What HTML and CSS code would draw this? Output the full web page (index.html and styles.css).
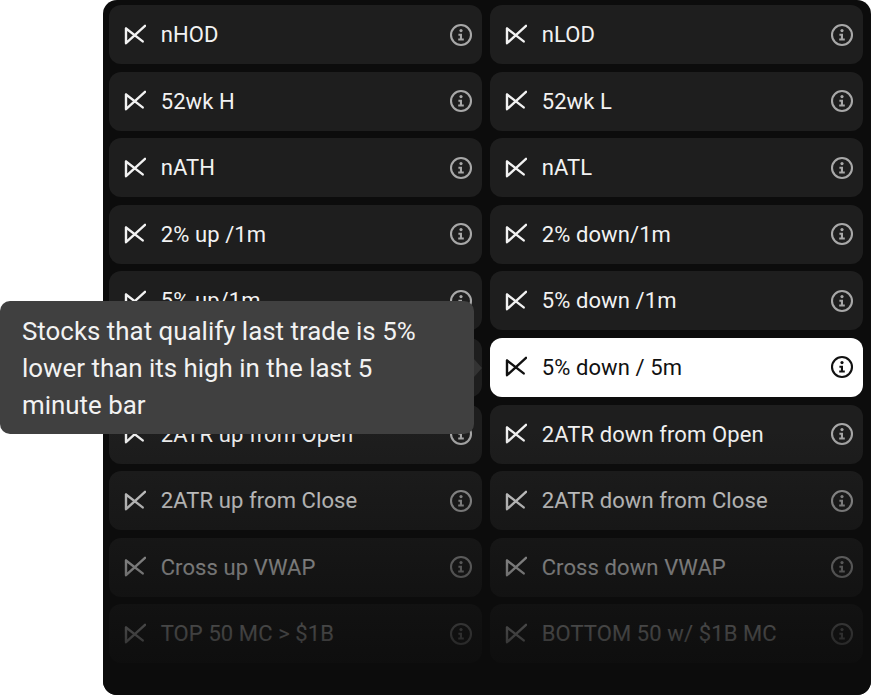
FILE: index.html
```html
<!DOCTYPE html>
<html lang="en">
<head>
  <meta charset="UTF-8">
  <title>Alerts</title>
  <link rel="stylesheet" href="styles.css">
</head>
<body>
  <!-- Shared icons -->
  <svg class="sprite" aria-hidden="true">
    <symbol id="icon-cross" viewBox="0 0 22 22">
      <path d="M2 4.5V19.2L21 1.8M2 4.5L18.7 17.4" fill="none" stroke="currentColor" stroke-width="2.4" stroke-linecap="round" stroke-linejoin="round"/>
    </symbol>
    <symbol id="icon-info" viewBox="0 0 24 24">
      <circle cx="12" cy="12" r="10" fill="none" stroke="currentColor" stroke-width="2.1"/>
      <circle cx="12" cy="7.6" r="1.6" fill="currentColor"/>
      <path d="M9.4 10.8H13V15.6H14.8V17.6H9.2V15.6H10.9V12.8H9.4Z" fill="currentColor"/>
    </symbol>
  </svg>

  <div class="panel">
    <div class="grid">
      <div class="card"><svg class="cross"><use href="#icon-cross"/></svg><span class="label">nHOD</span><svg class="info"><use href="#icon-info"/></svg></div>
      <div class="card"><svg class="cross"><use href="#icon-cross"/></svg><span class="label">nLOD</span><svg class="info"><use href="#icon-info"/></svg></div>
      <div class="card"><svg class="cross"><use href="#icon-cross"/></svg><span class="label">52wk H</span><svg class="info"><use href="#icon-info"/></svg></div>
      <div class="card"><svg class="cross"><use href="#icon-cross"/></svg><span class="label">52wk L</span><svg class="info"><use href="#icon-info"/></svg></div>
      <div class="card"><svg class="cross"><use href="#icon-cross"/></svg><span class="label">nATH</span><svg class="info"><use href="#icon-info"/></svg></div>
      <div class="card"><svg class="cross"><use href="#icon-cross"/></svg><span class="label">nATL</span><svg class="info"><use href="#icon-info"/></svg></div>
      <div class="card"><svg class="cross"><use href="#icon-cross"/></svg><span class="label">2% up /1m</span><svg class="info"><use href="#icon-info"/></svg></div>
      <div class="card"><svg class="cross"><use href="#icon-cross"/></svg><span class="label">2% down/1m</span><svg class="info"><use href="#icon-info"/></svg></div>
      <div class="card"><svg class="cross"><use href="#icon-cross"/></svg><span class="label">5% up/1m</span><svg class="info"><use href="#icon-info"/></svg></div>
      <div class="card"><svg class="cross"><use href="#icon-cross"/></svg><span class="label">5% down /1m</span><svg class="info"><use href="#icon-info"/></svg></div>
      <!-- this card sits fully behind the tooltip -->
      <div class="card"></div>
      <div class="card active"><svg class="cross"><use href="#icon-cross"/></svg><span class="label">5% down / 5m</span><svg class="info"><use href="#icon-info"/></svg></div>
      <div class="card"><svg class="cross"><use href="#icon-cross"/></svg><span class="label">2ATR up from Open</span><svg class="info"><use href="#icon-info"/></svg></div>
      <div class="card"><svg class="cross"><use href="#icon-cross"/></svg><span class="label">2ATR down from Open</span><svg class="info"><use href="#icon-info"/></svg></div>
      <div class="card"><svg class="cross"><use href="#icon-cross"/></svg><span class="label">2ATR up from Close</span><svg class="info"><use href="#icon-info"/></svg></div>
      <div class="card"><svg class="cross"><use href="#icon-cross"/></svg><span class="label">2ATR down from Close</span><svg class="info"><use href="#icon-info"/></svg></div>
      <div class="card"><svg class="cross"><use href="#icon-cross"/></svg><span class="label">Cross up VWAP</span><svg class="info"><use href="#icon-info"/></svg></div>
      <div class="card"><svg class="cross"><use href="#icon-cross"/></svg><span class="label">Cross down VWAP</span><svg class="info"><use href="#icon-info"/></svg></div>
      <div class="card"><svg class="cross"><use href="#icon-cross"/></svg><span class="label">TOP 50 MC &gt; $1B</span><svg class="info"><use href="#icon-info"/></svg></div>
      <div class="card"><svg class="cross"><use href="#icon-cross"/></svg><span class="label">BOTTOM 50 w/ $1B MC</span><svg class="info"><use href="#icon-info"/></svg></div>
    </div>
    <div class="fade"></div>
  </div>

  <div class="tooltip">Stocks that qualify last trade is 5% lower than its high in the last 5 minute bar</div>
</body>
</html>
```

FILE: styles.css
```css
html, body {
  margin: 0;
  height: 695px;
  overflow: hidden;
  background-color: white;
  font-family: Roboto, "Liberation Sans", sans-serif;
}

.sprite {
  display: none;
}

.panel {
  position: relative;
  box-sizing: border-box;
  height: 695px;
  margin-left: 103px;
  padding: 5px 8px 0 6px;
  background-color: #0c0c0c;
  border-radius: 14px;
  overflow: hidden;
}

.grid {
  display: grid;
  grid-template-columns: 373px 373px;
  grid-auto-rows: 59px;
  column-gap: 8px;
  row-gap: 7.6px;
}

.card {
  display: flex;
  align-items: center;
  padding: 0 9px 0 14.5px;
  background-color: #1e1e1e;
  border-radius: 12px;
  color: #f2f2f2;
}

.cross {
  width: 22px;
  height: 22px;
  flex: none;
}

.label {
  flex: 1;
  margin-left: 15.2px;
  font-size: 22px;
  letter-spacing: 0.1px;
}

.info {
  width: 24px;
  height: 24px;
  flex: none;
  color: #a8a8a8;
}

.active {
  background-color: white;
  color: #111;
}

.active .info {
  color: #111;
}

/* rows sink into the panel towards the bottom */
.fade {
  position: absolute;
  left: 0;
  right: 0;
  top: 430px;
  bottom: 0;
  background: linear-gradient(rgba(12, 12, 12, 0), rgba(12, 12, 12, 0.62) 60%, rgba(12, 12, 12, 0.88) 88%, #0c0c0c);
}

.tooltip {
  position: absolute;
  left: 0;
  top: 301px;
  box-sizing: border-box;
  width: 474px;
  height: 133px;
  padding: 12px 22px;
  background-color: #404040;
  border-radius: 10px;
  color: #f2f2f2;
  font-size: 25.9px;
  line-height: 37px;
}

.tooltip::after {
  content: "";
  position: absolute;
  left: 100%;
  top: 58px;
  border-left: 8px solid #333;
  border-top: 9px solid transparent;
  border-bottom: 9px solid transparent;
}
```
